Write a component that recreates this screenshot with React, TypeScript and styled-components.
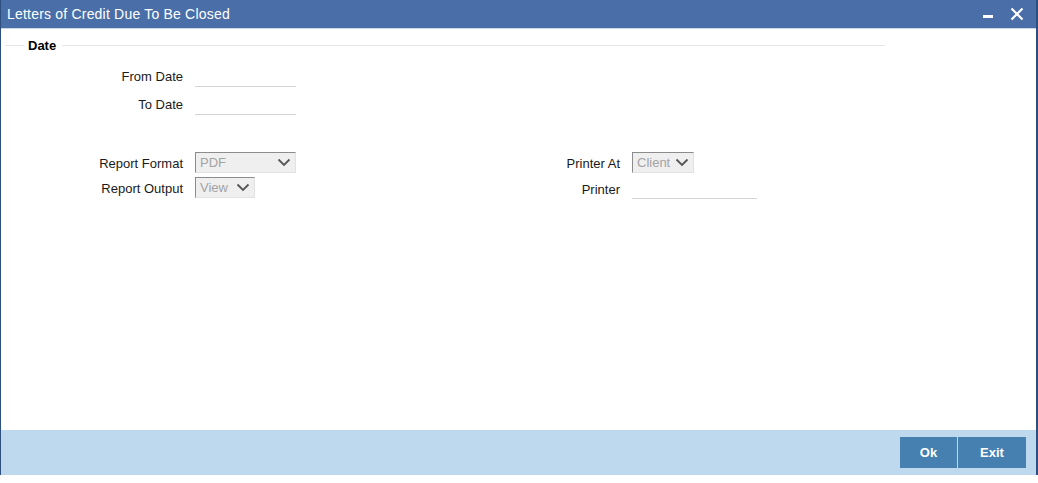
import React from "react";
import styled, { createGlobalStyle } from "styled-components";

const Global = createGlobalStyle`
  html, body { margin: 0; padding: 0; background: #ffffff; }
  body { font-family: "Liberation Sans", Arial, sans-serif; }
  * { box-sizing: border-box; }
`;

const Window = styled.div`
  width: 1038px;
  height: 475px;
  display: flex;
  flex-direction: column;
  border-left: 1px solid #2d4f80;
  border-right: 2px solid #2d4f80;
  background: #ffffff;
`;

const TitleBar = styled.div`
  height: 29px;
  flex: none;
  background: #4a6fa8;
  border-bottom: 1px solid #c9d7e6;
  display: flex;
  align-items: center;
  padding: 0 10px 1px 6px;
  color: #ffffff;
`;

const Title = styled.div`
  flex: 1;
  font-size: 14px;
  letter-spacing: 0.2px;
  line-height: 16px;
`;

const WinButton = styled.button<{ $gap?: number }>`
  border: 0;
  background: transparent;
  padding: 0;
  width: 18px;
  height: 18px;
  display: flex;
  align-items: center;
  justify-content: center;
  color: #ffffff;
  margin-left: ${(p) => p.$gap ?? 0}px;
`;

const Content = styled.div`
  flex: 1;
  padding: 8px 0 0 4px;
  display: flex;
  flex-direction: column;
`;

const Legend = styled.div`
  display: flex;
  align-items: center;
  width: 880px;
  height: 16px;
  gap: 4px;
`;

const LegendLine = styled.div<{ $w?: number }>`
  height: 1px;
  background: #e6e6e6;
  ${(p) => (p.$w ? `width: ${p.$w}px;` : "flex: 1;")}
`;

const LegendText = styled.div`
  font-weight: bold;
  font-size: 13px;
  color: #000;
  margin-right: 2px;
`;

const DateGroup = styled.div`
  display: flex;
  flex-direction: column;
  gap: 6px;
  margin-top: 12px;
`;

const Sections = styled.div`
  display: flex;
  margin-top: 37px;
`;

const Column = styled.div<{ $width: number }>`
  width: ${(p) => p.$width}px;
  display: flex;
  flex-direction: column;
  gap: 4px;
`;

const Row = styled.div<{ $labelWidth: number; $h?: number }>`
  display: grid;
  grid-template-columns: ${(p) => p.$labelWidth}px auto;
  column-gap: 12px;
  align-items: center;
  height: ${(p) => p.$h ?? 21}px;
`;

const Label = styled.div<{ $shift?: number }>`
  text-align: right;
  font-size: 13px;
  color: #1a1a1a;
  padding-top: ${(p) => p.$shift ?? 0}px;
`;

const TextField = styled.div<{ $w: number }>`
  width: ${(p) => p.$w}px;
  height: 100%;
  border-bottom: 1px solid #d4d4d4;
  align-self: stretch;
`;

const Select = styled.div<{ $w: number }>`
  width: ${(p) => p.$w}px;
  height: 21px;
  background: #efefef;
  border-top: 1px solid #8c8c8c;
  border-left: 1px solid #8c8c8c;
  border-right: 1px solid #e2e2e2;
  border-bottom: 1px solid #e2e2e2;
  display: flex;
  align-items: center;
  justify-content: space-between;
  padding: 0 4px 0 4px;
  font-size: 13px;
  color: #a3a3a3;
`;

const Footer = styled.div`
  height: 45px;
  flex: none;
  background: #bed9ed;
  display: flex;
  justify-content: flex-end;
  align-items: center;
  padding-right: 10px;
  gap: 1px;
`;

const FooterButton = styled.button<{ $w: number }>`
  width: ${(p) => p.$w}px;
  height: 31px;
  border: 0;
  background: #4580b0;
  color: #ffffff;
  font-family: "Liberation Sans", Arial, sans-serif;
  font-weight: bold;
  font-size: 13px;
  padding: 0;
`;

const Chevron = () => (
  <svg width="14" height="9" viewBox="0 0 14 9">
    <path d="M1.5 1.5 L7 7 L12.5 1.5" fill="none" stroke="#555" strokeWidth="1.8" />
  </svg>
);

export default function App() {
  return (
    <>
      <Global />
      <Window>
        <TitleBar>
          <Title>Letters of Credit Due To Be Closed</Title>
          <WinButton aria-label="minimize">
            <svg width="12" height="12" viewBox="0 0 12 12">
              <rect x="1" y="7" width="10" height="3" fill="#fff" />
            </svg>
          </WinButton>
          <WinButton aria-label="close" $gap={11}>
            <svg width="14" height="14" viewBox="0 0 14 14">
              <path d="M1.5 1.5 L12.5 12.5 M12.5 1.5 L1.5 12.5" stroke="#fff" strokeWidth="2.2" />
            </svg>
          </WinButton>
        </TitleBar>
        <Content>
          <Legend>
            <LegendLine $w={19} />
            <LegendText>Date</LegendText>
            <LegendLine />
          </Legend>
          <DateGroup>
            <Row $labelWidth={178} $h={22}>
              <Label>From Date</Label>
              <TextField $w={101} />
            </Row>
            <Row $labelWidth={178} $h={22}>
              <Label>To Date</Label>
              <TextField $w={101} />
            </Row>
          </DateGroup>
          <Sections>
            <Column $width={437}>
              <Row $labelWidth={178}>
                <Label $shift={2}>Report Format</Label>
                <Select $w={101}>
                  PDF
                  <Chevron />
                </Select>
              </Row>
              <Row $labelWidth={178}>
                <Label $shift={2}>Report Output</Label>
                <Select $w={60}>
                  View
                  <Chevron />
                </Select>
              </Row>
            </Column>
            <Column $width={400}>
              <Row $labelWidth={178}>
                <Label $shift={2}>Printer At</Label>
                <Select $w={62}>
                  Client
                  <Chevron />
                </Select>
              </Row>
              <Row $labelWidth={178} $h={22}>
                <Label $shift={2}>Printer</Label>
                <TextField $w={125} />
              </Row>
            </Column>
          </Sections>
        </Content>
        <Footer>
          <FooterButton $w={57}>Ok</FooterButton>
          <FooterButton $w={68}>Exit</FooterButton>
        </Footer>
      </Window>
    </>
  );
}
